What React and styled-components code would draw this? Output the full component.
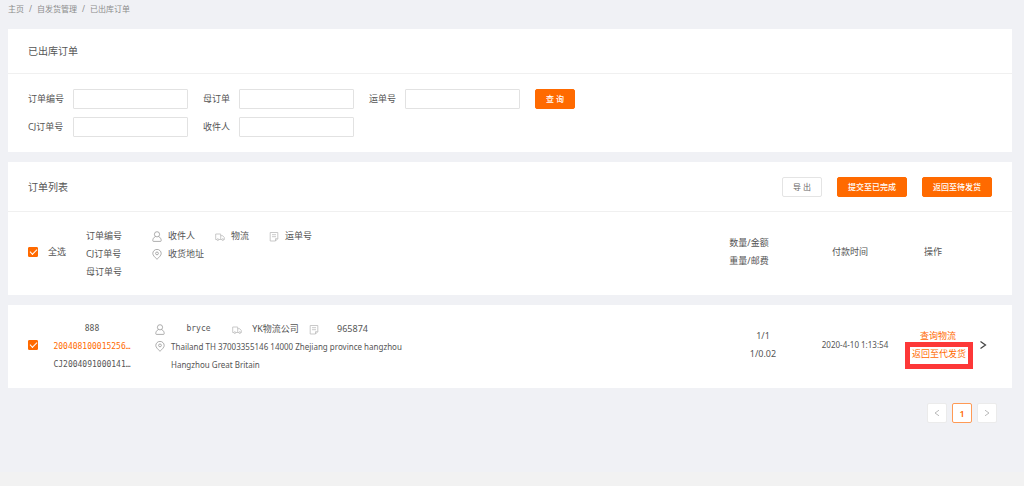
import React, { useState } from 'react';
import styled, { createGlobalStyle, css } from 'styled-components';

const fields = [
	{ id: 'orderNo', label: '订单编号' },
	{ id: 'parentNo', label: '母订单' },
	{ id: 'trackNo', label: '运单号', submit: true },
	{ id: 'cjNo', label: 'CJ订单号' },
	{ id: 'receiver', label: '收件人' }
];

const orders = [
	{
		id: '888',
		parentId: '200408100015256…',
		cjId: 'CJ2004091000141…',
		receiver: 'bryce',
		logistics: 'YK物流公司',
		trackNo: '965874',
		address: ['Thailand TH 37003355146 14000 Zhejiang province hangzhou', 'Hangzhou Great Britain'],
		amount: '1/1',
		weight: '1/0.02',
		paidAt: '2020-4-10 1:13:54'
	}
];

const UserIcon = () => (
	<Icon viewBox="0 0 10 11">
		<circle cx="5" cy="3.3" r="2.6" />
		<path d="M3.4 5.6C1.6 6.4.8 7.8.8 9.6c0 .5.2.8.7.8h7c.5 0 .7-.3.7-.8 0-1.8-.8-3.2-2.6-4" />
	</Icon>
);

const PinIcon = () => (
	<Icon viewBox="0 0 10 11">
		<path d="M5 10.3C2.6 8 .8 6.2.8 4.5a4.2 4.1 0 0 1 8.4 0C9.2 6.2 7.4 8 5 10.3z" />
		<circle cx="5" cy="4.4" r="1.4" />
	</Icon>
);

const TruckIcon = () => (
	<Icon viewBox="0 0 10 11" $light>
		<path d="M1.9 8.5H.7V3h5v5.5H3.7M5.7 4.700h2L9.300 6.500v2H8.700M5.700 8.500h1.200" />
		<circle cx="2.8" cy="8.6" r=".9" />
		<circle cx="7.8" cy="8.6" r=".9" />
	</Icon>
);

const NoteIcon = () => (
	<Icon viewBox="0 0 10 11" $light>
		<path d="M1.2 1.5h7.600v6.200L6.500 10H1.200zM8.800 7.700H6.500V10M3 3.700h4M3 5.700h4" />
	</Icon>
);

const Arrow = ({ left, size }) => (
	<ArrowSvg viewBox="0 0 8 8" $size={size}>
		<path d={left ? 'M6 1.2L2 4l4 2.8' : 'M2 1.2L6 4 2 6.8'} />
	</ArrowSvg>
);

function App() {
	const [allChecked, setAllChecked] = useState(true);
	const [checked, setChecked] = useState(orders.map(() => true));

	const toggleAll = () => {
		setChecked(orders.map(() => !allChecked));
		setAllChecked(!allChecked);
	};

	const toggle = index => {
		const next = checked.map((c, i) => (i === index ? !c : c));
		setChecked(next);
		setAllChecked(next.every(Boolean));
	};

	return (
		<Page>
			<GlobalStyle />
			<Breadcrumb>
				<a href="#home">主页</a>
				<span>/</span>
				<a href="#self">自发货管理</a>
				<span>/</span>
				<a href="#out">已出库订单</a>
			</Breadcrumb>

			<Card>
				<CardHead>
					<Title>已出库订单</Title>
				</CardHead>
				<SearchForm onSubmit={e => e.preventDefault()}>
					{fields.map(field => (
						<React.Fragment key={field.id}>
							<Label htmlFor={field.id}>{field.label}</Label>
							<TextInput id={field.id} type="text" />
							{field.submit && <Button $primary>查 询</Button>}
						</React.Fragment>
					))}
				</SearchForm>
			</Card>

			<Card $joined>
				<CardHead $tall>
					<Title>订单列表</Title>
					<Actions>
						<Button type="button">导 出</Button>
						<Button type="button" $primary>提交至已完成</Button>
						<Button type="button" $primary>返回至待发货</Button>
					</Actions>
				</CardHead>
			</Card>
			<OrderTable>
				<colgroup>
					<CheckCol />
					<IdCol />
					<col />
					<AmountCol />
					<TimeCol />
					<ActionCol />
					<MoreCol />
				</colgroup>
				<thead>
					<tr>
						<CheckCell as="th">
							<CheckLabel>
								<Checkbox type="checkbox" checked={allChecked} onChange={toggleAll} />
								全选
							</CheckLabel>
						</CheckCell>
						<IdHead>
							<Line>订单编号</Line>
							<Line>CJ订单号</Line>
							<Line>母订单号</Line>
						</IdHead>
						<InfoCell as="th">
							<InfoLine>
								<Item><UserIcon />收件人</Item>
								<Item><TruckIcon />物流</Item>
								<Item><NoteIcon />运单号</Item>
							</InfoLine>
							<InfoLine>
								<Item><PinIcon />收货地址</Item>
							</InfoLine>
						</InfoCell>
						<HeadCell>
							<Line>数量/金额</Line>
							<Line>重量/邮费</Line>
						</HeadCell>
						<HeadCell>付款时间</HeadCell>
						<HeadCell>操作</HeadCell>
						<td />
					</tr>
				</thead>
				<tbody>
					{orders.map((order, i) => (
						<tr key={order.id}>
							<CheckCell>
								<Checkbox
									type="checkbox"
									aria-label={order.id}
									checked={checked[i]}
									onChange={() => toggle(i)}
								/>
							</CheckCell>
							<IdCell>
								<Line>{order.id}</Line>
								<Line $active>{order.parentId}</Line>
								<Line>{order.cjId}</Line>
							</IdCell>
							<InfoCell $row>
								<InfoLine $row>
									<Item><UserIcon /><Value $mono>{order.receiver}</Value></Item>
									<Item><TruckIcon /><Value>{order.logistics}</Value></Item>
									<Item><NoteIcon /><Value>{order.trackNo}</Value></Item>
								</InfoLine>
								<AddressLine>
									<PinIcon />
									<div>
										{order.address.map(line => <Line key={line}>{line}</Line>)}
									</div>
								</AddressLine>
							</InfoCell>
							<AmountCell>
								<Line>{order.amount}</Line>
								<Line>{order.weight}</Line>
							</AmountCell>
							<TimeCell>{order.paidAt}</TimeCell>
							<ActionCell>
								<Line><Link href="#track">查询物流</Link></Line>
								<Line><Link href="#return">返回至代发货<Marker /></Link></Line>
							</ActionCell>
							<td>
								<MoreButton type="button" aria-label="more"><Arrow size={10} /></MoreButton>
							</td>
						</tr>
					))}
				</tbody>
			</OrderTable>

			<Pagination>
				<PageButton type="button" aria-label="prev" disabled><Arrow left size={8} /></PageButton>
				<PageButton type="button" $current>1</PageButton>
				<PageButton type="button" aria-label="next" disabled><Arrow size={8} /></PageButton>
			</Pagination>
		</Page>
	);
}

export default App;

const GlobalStyle = createGlobalStyle`
	* {
		box-sizing: border-box;
	}
	body {
		margin: 0;
		background: #f2f2f2;
		color: #555;
		font-family: 'Noto Sans', 'Noto Sans CJK SC', sans-serif;
		font-size: 9px;
		line-height: 18px;
	}
	button, input {
		font-family: inherit;
	}
	a {
		color: inherit;
		text-decoration: none;
	}
`;

const Page = styled.div`
	background: #f0f1f5;
	padding: 0 12px 49px 8px;
`;

const Breadcrumb = styled.nav`
	display: flex;
	gap: 5px;
	height: 29px;
	color: #8c8c8c;
	font-size: 8px;
`;

const Card = styled.section`
	background: #fff;
	margin-bottom: ${props => (props.$joined ? '0' : '10px')};
`;

const CardHead = styled.div`
	display: flex;
	align-items: center;
	justify-content: space-between;
	height: ${props => (props.$tall ? '50px' : '45px')};
	padding: 0 20px;
	border-bottom: 1px solid #f0f0f0;
`;

const Title = styled.h2`
	margin: 0;
	font-size: 10px;
	font-weight: 400;
`;

const SearchForm = styled.form`
	display: grid;
	grid-template-columns: 30px 115px 21px 115px 21px 115px auto;
	column-gap: 15px;
	row-gap: 8px;
	align-items: center;
	justify-content: start;
	padding: 15px 20px;
`;

const Label = styled.label`
	white-space: nowrap;
`;

const TextInput = styled.input`
	width: 115px;
	height: 20px;
	padding: 0 6px;
	border: 1px solid #e2e2e2;
	border-radius: 1px;
	background: #fff;
	font-size: 9px;
	outline: none;
`;

const Button = styled.button`
	height: 20px;
	padding: 0 10px;
	border: 1px solid #e4e4e4;
	border-radius: 2px;
	background: #fff;
	color: #666;
	font-size: 8px;
	line-height: 18px;
	cursor: pointer;
	${props => props.$primary && css`
		border-color: #ff6a00;
		background: #ff6a00;
		color: #fff;
		font-weight: 500;
	`}
`;

const Actions = styled.div`
	display: flex;
	gap: 15px;
`;

const OrderTable = styled.table`
	width: 100%;
	table-layout: fixed;
	border-collapse: collapse;

	thead, tbody tr {
		background: #fff;
	}
	/* gap between the heading card and the rows */
	tbody::before {
		content: '';
		display: block;
		height: 10px;
	}
	th, td {
		padding: 13px 0 16px;
		font-weight: 400;
		white-space: nowrap;
	}
`;

const CheckCol = styled.col`width: 45px;`;
const IdCol = styled.col`width: 78px;`;
const AmountCol = styled.col`width: 98px;`;
const TimeCol = styled.col`width: 104px;`;
const ActionCol = styled.col`width: 62px;`;
const MoreCol = styled.col`width: 48px;`;

const CheckCell = styled.td`
	text-align: left;
	&& {
		padding-left: 20px;
	}
`;

const CheckLabel = styled.label`
	display: flex;
	align-items: center;
	gap: 10px;
`;

const Checkbox = styled.input`
	appearance: none;
	display: block;
	flex: none;
	width: 10px;
	height: 10px;
	margin: 0;
	border: 1px solid #d9d9d9;
	border-radius: 1px;
	background: #fff;
	&:checked {
		display: grid;
		place-items: center;
		border-color: #ff6a00;
		background: #ff6a00;
	}
	&:checked::after {
		content: '';
		width: 6px;
		height: 3px;
		border-left: 1px solid #fff;
		border-bottom: 1px solid #fff;
		transform: translateY(-1px) rotate(-45deg);
	}
`;

const Line = styled.div`
	height: 18px;
	color: ${props => (props.$active ? '#ff6a00' : 'inherit')};
`;

const IdHead = styled.th`
	text-align: left;
	&& {
		padding: 15px 0 14px 33px;
	}
`;

const IdCell = styled.td`
	text-align: center;
	font-family: 'DejaVu Sans Mono', monospace;
	font-size: 8px;
	&& {
		padding: 15px 0 14px;
	}
`;

const InfoCell = styled.td`
	text-align: left;
	vertical-align: top;
	&& {
		padding: 15px 0 14px ${props => (props.$row ? '24px' : '21px')};
	}
`;

const InfoLine = styled.div`
	display: flex;
	gap: ${props => (props.$row ? '6px' : '20px')};
	height: 18px;
`;

const Item = styled.span`
	display: flex;
	align-items: center;
	gap: 6px;
`;

const Value = styled.span`
	min-width: 55px;
	text-align: center;
	${props => props.$mono && css`
		font-family: 'DejaVu Sans Mono', monospace;
		font-size: 8px;
	`}
`;

const AddressLine = styled.div`
	display: flex;
	gap: 6px;
	font-size: 8px;
	svg {
		margin-top: 3px;
	}
`;

const Icon = styled.svg`
	flex: none;
	width: 10px;
	height: 11px;
	fill: none;
	stroke: ${props => (props.$light ? '#bbb' : '#999')};
	stroke-width: .8;
`;

const HeadCell = styled.th`
	text-align: center;
`;

const AmountCell = styled.td`
	text-align: center;
	&& {
		padding-left: 28px;
	}
`;

const TimeCell = styled.td`
	text-align: center;
	font-size: 8px;
	&& {
		padding-left: 10px;
	}
`;

const ActionCell = styled.td`
	text-align: center;
	&& {
		padding-left: 10px;
	}
`;

const Link = styled.a`
	position: relative;
	color: #ff6a00;
`;

/* red frame drawn over the return link */
const Marker = styled.i`
	position: absolute;
	top: -5px;
	left: -7px;
	right: -7px;
	height: 27px;
	border: 5px solid #fd3838;
	pointer-events: none;
`;

const ArrowSvg = styled.svg`
	display: block;
	width: ${props => props.$size}px;
	height: ${props => props.$size}px;
	fill: none;
	stroke: currentColor;
`;

const MoreButton = styled.button`
	display: block;
	margin-left: 14px;
	padding: 0;
	border: 0;
	background: none;
	color: #444;
	cursor: pointer;
`;

const Pagination = styled.div`
	display: flex;
	justify-content: flex-end;
	gap: 5px;
	padding: 15px 15px 0 0;
`;

const PageButton = styled.button`
	display: flex;
	align-items: center;
	justify-content: center;
	width: 20px;
	height: 20px;
	padding: 0;
	border: 1px solid ${props => (props.$current ? '#ff9a55' : '#ebebeb')};
	border-radius: 2px;
	background: #fff;
	color: ${props => (props.$current ? '#ff6a00' : '#bbb')};
	font-size: 9px;
	font-weight: ${props => (props.$current ? 600 : 400)};
`;
